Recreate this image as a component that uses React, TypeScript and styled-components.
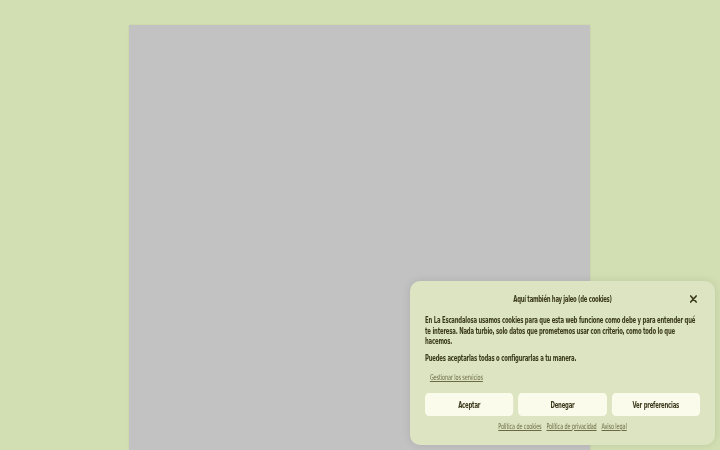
import styled, { createGlobalStyle } from "styled-components";

// the reference uses a very narrow display face; squeeze a condensed one to match
const SQUEEZE = 0.7;
const CONTENT_W = 275;

const GlobalStyle = createGlobalStyle`
  html, body {
    margin: 0;
    padding: 0;
    background: #d2dfb2;
    overflow: hidden;
  }
  body {
    font-family: "DejaVu Sans Condensed", "Liberation Sans Narrow", "Liberation Sans", sans-serif;
    color: #3b3a1d;
  }
`;

const Page = styled.div`
  width: 720px;
  height: 450px;
  padding-top: 25px;
  padding-left: 129px;
  box-sizing: border-box;
  overflow: hidden;
`;

const Placeholder = styled.div`
  width: 461px;
  height: 440px;
  background: #c2c2c2;
  box-shadow: 0 0 2px rgba(0, 0, 0, 0.08);
`;

const Banner = styled.div`
  position: fixed;
  left: 410px;
  top: 281px;
  width: 305px;
  height: 164px;
  box-sizing: border-box;
  padding: 11px 15px 0 15px;
  background: #dce4c1;
  border-radius: 10px;
  box-shadow: 0 0 8px rgba(0, 0, 0, 0.1);
  overflow: hidden;
`;

const Inner = styled.div`
  width: ${CONTENT_W / SQUEEZE}px;
  transform: scaleX(${SQUEEZE});
  transform-origin: left top;
  display: flex;
  flex-direction: column;
`;

const Header = styled.div`
  display: flex;
  align-items: center;
  justify-content: center;
  position: relative;
  height: 14px;
`;

const Title = styled.div`
  font-size: 8.5px;
  font-weight: 700;
  letter-spacing: -0.4px;
`;

const Close = styled.button`
  position: absolute;
  right: 3px;
  top: 2px;
  width: 12px;
  height: 10px;
  padding: 0;
  border: 0;
  background: none;
  display: flex;
  align-items: center;
  justify-content: center;
  cursor: pointer;
`;

const Message = styled.p<{ $top: number }>`
  margin: ${(p) => p.$top}px 0 0;
  font-size: 8.5px;
  line-height: 10.5px;
  font-weight: 700;
  letter-spacing: -0.3px;
`;

const Manage = styled.a`
  margin: 10px 0 0 7px;
  font-size: 7.8px;
  color: #6c6a45;
  text-decoration: underline;
  letter-spacing: -0.15px;
`;

const Buttons = styled.div`
  display: grid;
  grid-template-columns: repeat(3, 1fr);
  gap: 7px;
  margin-top: 11px;
`;

const Button = styled.button`
  height: 23px;
  border: 0;
  border-radius: 5px;
  background: #fbfbec;
  color: #3b3a1d;
  font-family: inherit;
  font-size: 8.5px;
  font-weight: 700;
  letter-spacing: -0.3px;
  cursor: pointer;
`;

const Links = styled.div`
  display: flex;
  justify-content: center;
  gap: 7px;
  margin-top: 6px;
`;

const Link = styled.a`
  font-size: 7.8px;
  color: #6c6a45;
  text-decoration: underline;
  letter-spacing: -0.15px;
`;

export default function App() {
  return (
    <>
      <GlobalStyle />
      <Page>
        <Placeholder />
      </Page>
      <Banner>
        <Inner>
          <Header>
            <Title>Aquí también hay jaleo (de cookies)</Title>
            <Close aria-label="Cerrar">
              <svg width="11" height="8" viewBox="0 0 11 8">
                <path d="M1.5 1L9.5 7M9.5 1L1.5 7" stroke="#3b3a1d" strokeWidth="1.9" strokeLinecap="round" />
              </svg>
            </Close>
          </Header>
          <Message $top={9}>
            En La Escandalosa usamos cookies para que esta web funcione como debe y para entender qué te interesa.
            Nada turbio, solo datos que prometemos usar con criterio, como todo lo que hacemos.
          </Message>
          <Message $top={6}>Puedes aceptarlas todas o configurarlas a tu manera.</Message>
          <Manage>Gestionar los servicios</Manage>
          <Buttons>
            <Button>Aceptar</Button>
            <Button>Denegar</Button>
            <Button>Ver preferencias</Button>
          </Buttons>
          <Links>
            <Link>Política de cookies</Link>
            <Link>Política de privacidad</Link>
            <Link>Aviso legal</Link>
          </Links>
        </Inner>
      </Banner>
    </>
  );
}
